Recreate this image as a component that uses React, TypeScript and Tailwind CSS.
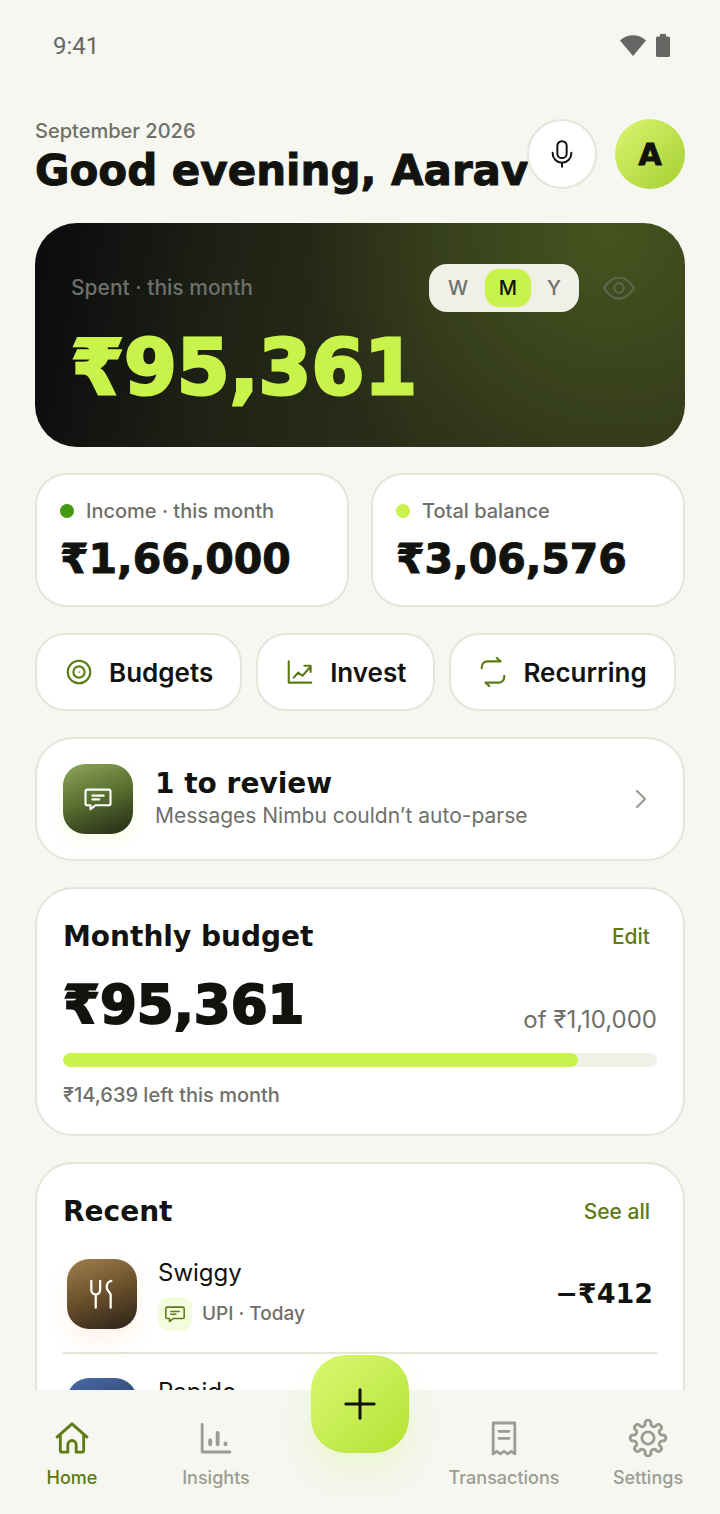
import type { ReactNode, SVGProps } from "react";

const display = "font-['DejaVu_Sans',sans-serif] font-bold";

// Eight round lobes, drawn as alternating outward and inward arcs.
const gearPath =
  Array.from({ length: 16 }, (_, i) => {
    const angle = ((i * 22.5 + 11.25) * Math.PI) / 180;
    const point = `${(12 + 9.3 * Math.sin(angle)).toFixed(2)} ${(12 - 9.3 * Math.cos(angle)).toFixed(2)}`;
    return i === 0 ? `M${point}` : `A1.83 1.83 0 0 ${i % 2 ? 0 : 1} ${point}`;
  }).join("") + "A1.83 1.83 0 0 1 13.81 2.88";

function Icon({ children, ...props }: SVGProps<SVGSVGElement>) {
  return (
    <svg
      viewBox="0 0 24 24"
      fill="none"
      stroke="currentColor"
      strokeWidth={1.7}
      strokeLinecap="round"
      strokeLinejoin="round"
      aria-hidden="true"
      {...props}
    >
      {children}
    </svg>
  );
}

function MessageIcon({ className }: { className: string }) {
  return (
    <Icon className={className}>
      <path d="M3.500 4.500h17A1.500 1.500 0 0 1 22 6v9.500a1.500 1.500 0 0 1-1.500 1.500H10l-4 3.200V17H3.500A1.500 1.500 0 0 1 2 15.500V6A1.500 1.500 0 0 1 3.500 4.500z" />
      <path d="M7.500 9.300h9M7.500 12.300h5.500" />
    </Icon>
  );
}

function StatusBar() {
  return (
    <div className="flex h-[91px] shrink-0 items-center justify-between pr-[50px] pl-[53px] text-[#666664]">
      <span className="font-['Roboto',sans-serif] text-2xl">9:41</span>
      <div className="flex items-center gap-[10px]">
        <svg viewBox="0 0 26 21" className="h-[21px] w-[26px]" fill="currentColor">
          <path d="M13 21 0 5.500C7-1.600 19-1.600 26 5.500z" />
        </svg>
        <svg viewBox="0 0 14 23" className="h-[23px] w-[14px]" fill="currentColor">
          <path d="M4 0h6v2.500h2.500A1.500 1.500 0 0 1 14 4v17.500a1.500 1.500 0 0 1-1.500 1.500h-11A1.500 1.500 0 0 1 0 21.500V4a1.500 1.500 0 0 1 1.500-1.500H4z" />
        </svg>
      </div>
    </div>
  );
}

function Header() {
  return (
    <header className="flex items-start">
      <div className="min-w-0 flex-1 whitespace-nowrap">
        <p className="text-xl leading-[24px] font-medium text-[#6f706a]">September 2026</p>
        <h1 className={`${display} text-[42px] leading-[56px] [-webkit-text-stroke:1px_currentColor]`}>
          Good evening, Aarav
        </h1>
      </div>
      <button
        aria-label="Voice entry"
        className="mr-[18px] grid size-[70px] shrink-0 place-items-center rounded-full border-2 border-[#e4e6dc] bg-white"
      >
        <Icon className="size-7">
          <rect x="8" y="1" width="8" height="14.500" rx="4" />
          <path d="M4 11v.500a8 8 0 0 0 16 0V11M12 19.500V23" />
        </Icon>
      </button>
      <button
        aria-label="Profile"
        className={`${display} size-[70px] shrink-0 rounded-full bg-linear-to-br from-[#dbf56f] to-[#a5d02d] text-[30px] [-webkit-text-stroke:1px_currentColor]`}
      >
        A
      </button>
    </header>
  );
}

function Hero() {
  return (
    <section className="flex h-56 flex-col rounded-[42px] bg-[radial-gradient(circle_at_88%_5%,#46541f_0%,#46541f00_50%),linear-gradient(100deg,#0b0d0f_3%,#1f2315_30%,#2b2f19_60%,#2d3219_100%)] px-9 pt-[41px]">
      <div className="flex items-center">
        <h2 className="flex-1 text-[21px] font-medium text-[#6f706a]">Spent · this month</h2>
        <div className="flex h-12 items-center rounded-[18px] bg-[#eff1e8] px-[6px] text-xl font-medium text-[#6f706a]">
          <button className="h-[38px] w-[46px]">W</button>
          <button aria-pressed="true" className="mx-1 h-[38px] w-[46px] rounded-[14px] bg-[#c9f24b] text-[#12130f]">
            M
          </button>
          <button className="h-[38px] w-[38px]">Y</button>
        </div>
        <button aria-label="Hide amounts" className="mr-3 ml-[22px] text-[#5f634c]">
          <Icon className="size-9" strokeWidth={1.5}>
            <path d="M2 12C5 7 8.300 5 12 5s7 2 10 7c-3 5-6.300 7-10 7s-7-2-10-7z" />
            <circle cx="12" cy="12" r="3.200" />
          </Icon>
        </button>
      </div>
      <p className={`${display} mt-2 text-[76px] leading-[96px] text-[#c9f24b] [-webkit-text-stroke:3px_currentColor]`}>
        ₹95,361
      </p>
    </section>
  );
}

function Stat({ label, amount, dot }: { label: string; amount: string; dot: string }) {
  return (
    <section className="h-[134px] flex-1 rounded-[32px] border-2 border-[#e4e6dc] bg-white px-[23px] pt-[22px]">
      <h2 className="flex items-center gap-3 text-xl leading-[28px] font-medium text-[#6f706a]">
        <span className={`size-[14px] rounded-full ${dot}`} />
        {label}
      </h2>
      <p className={`${display} mt-[10px] text-[41px] leading-[48px] [-webkit-text-stroke:1px_currentColor]`}>
        {amount}
      </p>
    </section>
  );
}

function Chip({ label, children }: { label: string; children: ReactNode }) {
  return (
    <button className="flex h-[78px] items-center gap-[15px] rounded-[30px] border-2 border-[#e4e6dc] bg-white px-[27px] text-[26px] font-semibold">
      <Icon className="size-[30px] text-[#5d7a14]">{children}</Icon>
      {label}
    </button>
  );
}

function Card({ children }: { children: ReactNode }) {
  return <section className="rounded-[38px] border-2 border-[#e4e6dc] bg-white px-[26px]">{children}</section>;
}

function CardHeader({ title, action }: { title: string; action: string }) {
  return (
    <div className="flex h-[48px] items-center justify-between">
      <h2 className={`${display} text-[28px]`}>{title}</h2>
      <button className="mr-[7px] text-[21px] font-medium text-[#5d7a14]">{action}</button>
    </div>
  );
}

function NavItem({ label, active, children }: { label: string; active?: boolean; children: ReactNode }) {
  return (
    <a
      href="#"
      aria-current={active ? "page" : undefined}
      className={`flex flex-1 flex-col items-center gap-2 pt-7 text-lg leading-[24px] font-medium ${
        active ? "text-[#5d7a14]" : "text-[#9b9d92]"
      }`}
    >
      <Icon className="size-10">{children}</Icon>
      {label}
    </a>
  );
}

export default function App() {
  const spent = 95361;
  const budget = 110000;

  return (
    <div className="flex h-screen flex-col overflow-hidden bg-[#f5f7f0] font-['Inter',sans-serif] text-[#12130f]">
      <StatusBar />

      <main className="flex min-h-0 flex-1 flex-col overflow-y-auto px-[35px] pt-7 [scrollbar-width:none]">
        <Header />

        <div className="mt-6 flex shrink-0 flex-col gap-[26px]">
          <Hero />

          <div className="flex gap-[22px]">
            <Stat label="Income · this month" amount="₹1,66,000" dot="bg-[#46990f]" />
            <Stat label="Total balance" amount="₹3,06,576" dot="bg-[#c9f24b]" />
          </div>

          <div className="flex gap-[14px]">
            <Chip label="Budgets">
              <circle cx="12" cy="12" r="9" />
              <circle cx="12" cy="12" r="4.500" />
              <circle cx="12" cy="12" r=".2" strokeWidth="1" />
            </Chip>
            <Chip label="Invest">
              <path d="M3 3.500V20.500h18M7 16.500l3.500-4 3.500 2.500 6.500-7.500M15.500 7h5v5" />
            </Chip>
            <Chip label="Recurring">
              <path d="M3 9V8a4.500 4.500 0 0 1 4.500-4.500H18L15 .8M21 15v1a4.500 4.500 0 0 1-4.500 4.500H6l3 2.700" />
            </Chip>
          </div>

          <Card>
            <button className="flex h-[120px] w-full items-center text-left">
              <span className="grid size-[70px] place-items-center rounded-[22px] bg-linear-160 from-[#8fa75c] via-[#566d2d] to-[#252a17] text-white shadow-[0_6px_16px_#c9f24b26]">
                <MessageIcon className="size-[30px]" />
              </span>
              <span className="ml-[22px] flex-1">
                <span className={`${display} block text-[28px] leading-[34px]`}>1 to review</span>
                <span className="block text-[21px] leading-[30px] text-[#6f706a]">Messages Nimbu couldn’t auto-parse</span>
              </span>
              <Icon className="size-8 text-[#9b9d92]">
                <path d="m9 6 6 6-6 6" />
              </Icon>
            </button>
          </Card>

          <Card>
            <div className="pt-6 pb-[25px]">
              <CardHeader title="Monthly budget" action="Edit" />
              <div className="mt-[10px] flex items-end justify-between">
                <p className={`${display} text-[53px] leading-[68px] [-webkit-text-stroke:2px_currentColor]`}>₹95,361</p>
                <p className="text-2xl leading-[38px] text-[#6f706a]">of ₹1,10,000</p>
              </div>
              <div className="mt-[14px] h-[14px] overflow-hidden rounded-full bg-[#eff1e8]">
                <div
                  className="h-full rounded-full bg-[#c9f24b]"
                  style={{ width: `${(spent / budget) * 100}%` }}
                />
              </div>
              <p className="mt-[14px] text-xl leading-[28px] font-medium text-[#6f706a]">₹14,639 left this month</p>
            </div>
          </Card>

          <Card>
            <div className="pt-6">
              <CardHeader title="Recent" action="See all" />
              <div className="flex h-[118px] items-center border-b-2 border-[#e4e6dc] px-1">
                <span className="grid size-[70px] place-items-center rounded-[22px] bg-linear-160 from-[#a1804f] via-[#6a502a] to-[#2b2219] text-white shadow-[0_12px_22px_#f59e4b1f]">
                  <Icon className="size-8">
                    <path d="M4 2.200V9a3.300 3.300 0 0 0 6.600 0V2.200M7.300 12.500v9.800M19 2.200c-2.500.5-3.500 2-3.500 4.800 0 3.500 3 3 3 6v9.300" />
                  </Icon>
                </span>
                <div className="ml-[21px] flex-1">
                  <p className="text-2xl">Swiggy</p>
                  <p className="mt-2 flex items-center gap-[10px] text-[19px] font-medium text-[#6f706a]">
                    <span className="grid size-[34px] place-items-center rounded-[10px] bg-[#f3fddd] text-[#5d7a14]">
                      <MessageIcon className="size-[22px]" />
                    </span>
                    UPI · Today
                  </p>
                </div>
                <p className={`${display} text-[27px]`}>−₹412</p>
              </div>
              <div className="flex h-[118px] items-center px-1">
                <span className="size-[70px] rounded-[22px] bg-linear-160 from-[#4a6cab] to-[#1b2438]" />
                <div className="ml-[21px] flex-1">
                  <p className="text-2xl">Rapido</p>
                  <p className="mt-2 text-[19px] leading-[34px] font-medium text-[#6f706a]">UPI · Today</p>
                </div>
              </div>
            </div>
          </Card>
        </div>
      </main>

      <nav className="relative flex h-[124px] shrink-0 bg-[#f5f7f0]">
        <NavItem label="Home" active>
          <path d="M3 11.500 12 3.500l9 8M5 10v9.500a1 1 0 0 0 1 1h3.500V16a2.500 2.500 0 0 1 5 0v4.500H18a1 1 0 0 0 1-1V10" />
        </NavItem>
        <NavItem label="Insights">
          <path d="M3.700 3.800v16.600h16.600" />
          <path d="M8.500 13.300v2.500M13 9v6.800M17.700 15.300v.5" strokeWidth="2.300" />
        </NavItem>
        <div className="flex-1">
          <button
            aria-label="Add transaction"
            className="absolute -top-[35px] left-1/2 grid size-[98px] -translate-x-1/2 place-items-center rounded-[35px] bg-linear-to-br from-[#dbf870] to-[#b2e22d] shadow-[0_18px_30px_#c9f24b30]"
          >
            <Icon className="size-10" strokeWidth={1.8}>
              <path d="M12 3.500v17M3.500 12h17" />
            </Icon>
          </button>
        </div>
        <NavItem label="Transactions">
          <path d="M5.500 3h13v18.500l-2.200-1.500-2.100 1.500-2.200-1.500-2.200 1.500L7.700 20l-2.200 1.500zM9 8h6M9 12.200h6" />
        </NavItem>
        <NavItem label="Settings">
          <path d={gearPath} />
          <circle cx="12" cy="12" r="3.700" />
        </NavItem>
      </nav>
    </div>
  );
}
